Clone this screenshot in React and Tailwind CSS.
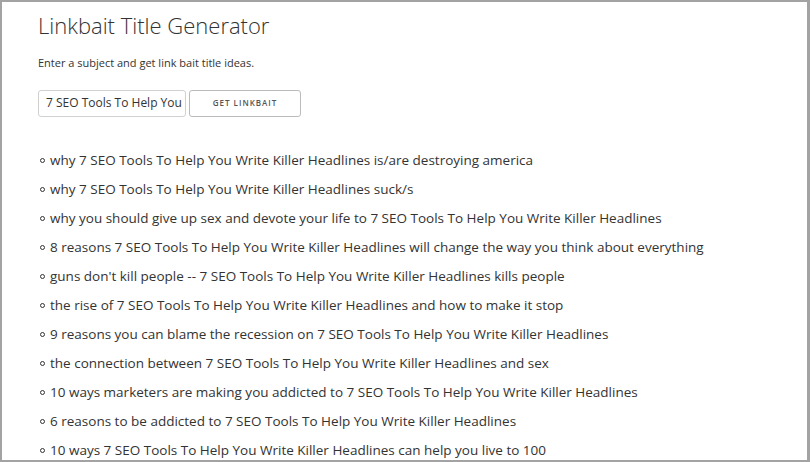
const items = [
  "why 7 SEO Tools To Help You Write Killer Headlines is/are destroying america",
  "why 7 SEO Tools To Help You Write Killer Headlines suck/s",
  "why you should give up sex and devote your life to 7 SEO Tools To Help You Write Killer Headlines",
  "8 reasons 7 SEO Tools To Help You Write Killer Headlines will change the way you think about everything",
  "guns don't kill people -- 7 SEO Tools To Help You Write Killer Headlines kills people",
  "the rise of 7 SEO Tools To Help You Write Killer Headlines and how to make it stop",
  "9 reasons you can blame the recession on 7 SEO Tools To Help You Write Killer Headlines",
  "the connection between 7 SEO Tools To Help You Write Killer Headlines and sex",
  "10 ways marketers are making you addicted to 7 SEO Tools To Help You Write Killer Headlines",
  "6 reasons to be addicted to 7 SEO Tools To Help You Write Killer Headlines",
  "10 ways 7 SEO Tools To Help You Write Killer Headlines can help you live to 100",
];

export default function App() {
  return (
    <div className="w-[810px] h-[462px] overflow-hidden bg-[#a3a3a3] pl-[2px] pt-[2px] pr-[3px] pb-[2px]" style={{ fontFamily: "'Open Sans', sans-serif" }}>
      <div className="h-full bg-white pl-[36px] text-[#333]">
        <h1 className="text-[22px] font-light leading-none pt-[12px] text-[#333]">Linkbait Title Generator</h1>
        <p className="text-[11px] mt-[19px] text-[#333]">Enter a subject and get link bait title ideas.</p>
        <div className="flex gap-[3px] mt-[18px]">
          <div className="w-[148px] h-[27px] border border-[#d1d1d1] rounded-[3px] flex items-center px-[7px] text-[12px] overflow-hidden whitespace-nowrap">7 SEO Tools To Help You W</div>
          <div className="w-[112px] h-[27px] border border-[#bbb] rounded-[3px] flex items-center justify-center text-[8px] font-semibold tracking-[1px] text-[#555]">GET LINKBAIT</div>
        </div>
        <ul className="mt-[29px]">
          {items.map((t) => (
            <li key={t} className="flex items-center h-[29px] text-[13.5px] text-[#333] whitespace-nowrap">
              <span className="w-[5px] h-[5px] rounded-full border border-[#333] ml-[2px] mr-[5px]" />
              {t}
            </li>
          ))}
        </ul>
      </div>
    </div>
  );
}
